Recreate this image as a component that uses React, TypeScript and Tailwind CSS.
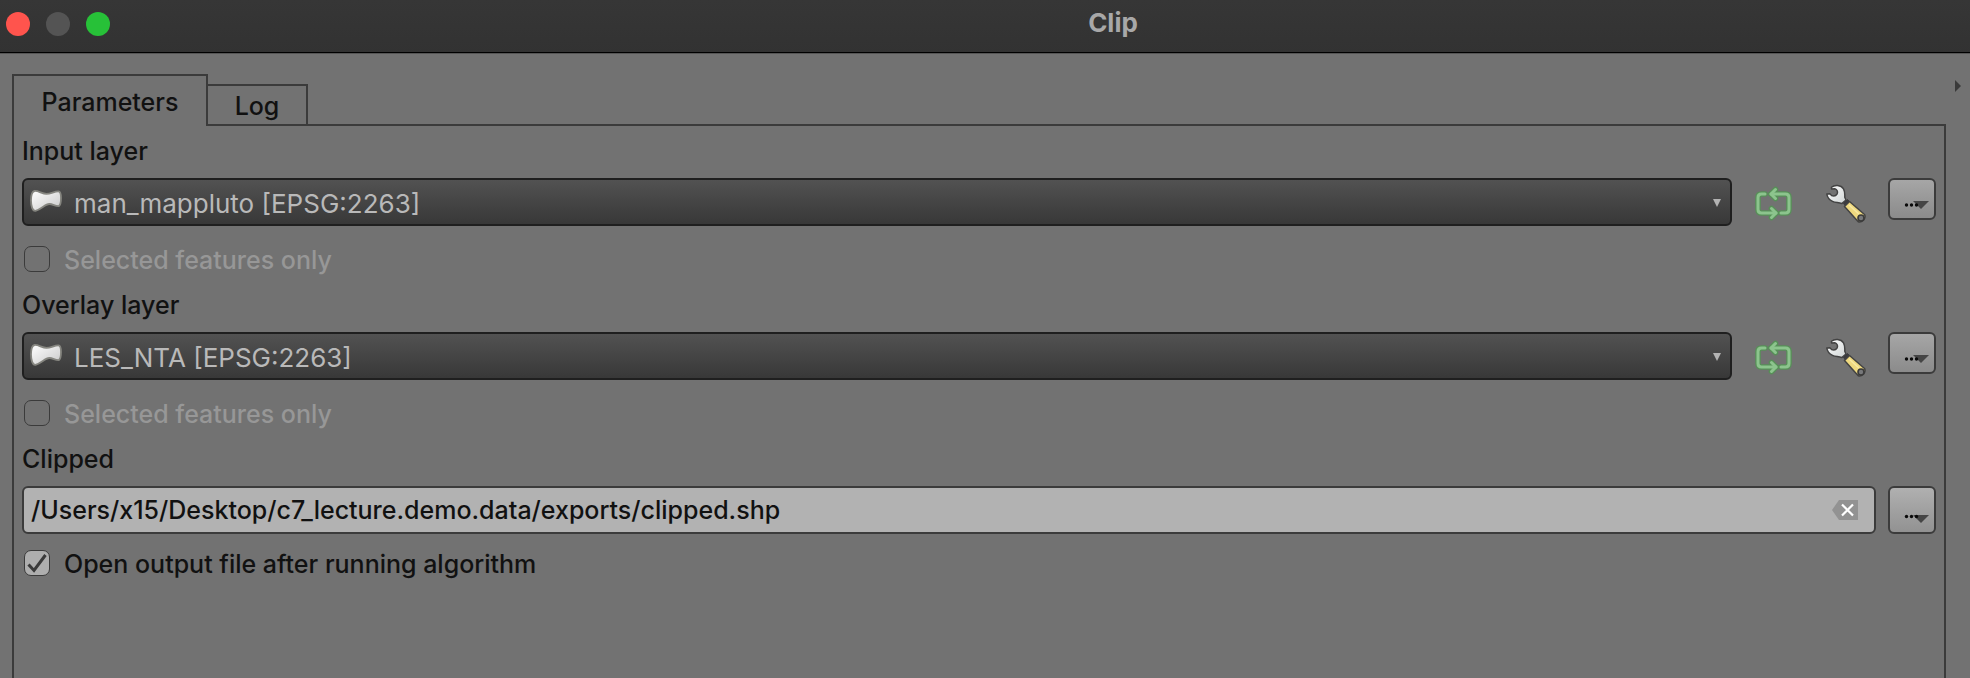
import { useState } from "react";

function PolygonIcon() {
  return (
    <svg className="pointer-events-none absolute left-2 top-[11px] h-6 w-8" viewBox="0 0 32 24" aria-hidden="true">
      <defs>
        <linearGradient id="poly" x1="0" y1="0" x2="1" y2="1">
          <stop offset="0" stopColor="#ffffff" />
          <stop offset="1" stopColor="#c8c8c8" />
        </linearGradient>
      </defs>
      <path
        d="M4.500 2C8.500 1.600 12 4.800 16.500 4.800C21 4.800 24.500 2.200 28.500 2.400C30.500 2.600 31 5.500 31 9C31 12.500 30.600 15.800 29 17C26 17.600 23 15.200 19.500 15C15 14.800 11.500 20.500 5.500 21.800C2.500 22.200 1 17 1 11.500C1 6.500 2 2.600 4.500 2Z"
        fill="url(#poly)"
        stroke="#85857f"
        strokeWidth="1.8"
        strokeLinejoin="round"
      />
    </svg>
  );
}

function IteratePaths() {
  return (
    <>
      <path d="M10 7H6.500Q3 7 3 10.500V22.500Q3 26 6.500 26H21" />
      <path d="M16.500 21.500L21 26L16.500 30.500" />
      <path d="M26 26H30.500Q34 26 34 22.500V10.500Q34 7 30.500 7H16" />
      <path d="M20.500 2.500L16 7L20.500 11.500" />
    </>
  );
}

function IterateIcon() {
  return (
    <svg className="h-9 w-10" viewBox="-1 -1 40 36" fill="none" strokeLinecap="round" strokeLinejoin="round" aria-hidden="true">
      <g stroke="#4f9a50" strokeWidth="5.600" opacity="0.75">
        <IteratePaths />
      </g>
      <g stroke="#8cc48d" strokeWidth="3">
        <IteratePaths />
      </g>
    </svg>
  );
}

function WrenchIcon() {
  return (
    <svg className="h-10 w-10" viewBox="0 0 40 40" aria-hidden="true">
      <defs>
        <linearGradient id="steel" x1="0" y1="0" x2="1" y2="1">
          <stop offset="0" stopColor="#ffffff" />
          <stop offset="1" stopColor="#cfd4d4" />
        </linearGradient>
      </defs>
      <path
        d="M5.500 3.200C8.500 0.600 15 0.800 17.500 4.800C19.200 7.800 18.800 10.500 18.800 13.200L20 16L15.800 19.600C12.500 18.200 9.500 19 6.500 17.400C3 15.600 1.200 13 0.800 10L4 9.800C6 12.800 9.500 12.600 11 10.200C12.200 7.800 11 5.400 8.800 4.800L5.500 5Z"
        fill="url(#steel)"
        stroke="#434343"
        strokeWidth="1.500"
        strokeLinejoin="round"
      />
      <path d="M17.500 19.500L21.500 15.500L24 18L19.500 22Z" fill="#3c3c40" stroke="#3c3c40" strokeLinejoin="round" />
      <path
        d="M23.500 17.500L38.500 30.500Q40 33 37.500 36Q34.500 39 32 37.500L18.500 22.500Z"
        fill="#efd97f"
        stroke="#434343"
        strokeWidth="1.500"
        strokeLinejoin="round"
      />
      <path d="M23 21L33 30" stroke="#f8e9a4" strokeWidth="1.500" />
      <circle cx="35" cy="34" r="3" fill="#77787a" stroke="#3a3a3a" strokeWidth="1.600" />
    </svg>
  );
}

function MoreButton({ label, tall }: { label: string; tall?: boolean }) {
  const dotY = tall ? 3.5 : 6;
  return (
    <button
      type="button"
      aria-label={label}
      className={
        "flex w-12 shrink-0 items-end justify-end rounded-md border-2 border-[#3b3b3b] bg-linear-to-b pb-[7px] " +
        (tall ? "h-12 from-[#b0b0b0] to-[#929292]" : "h-[42px] from-[#a6a6a6] to-[#8b8b8b]")
      }
    >
      <svg className="mr-[5px] h-3 w-7" viewBox="0 0 28 12" aria-hidden="true">
        <path d="M12 2H28L20 10Z" fill="#454545" />
        <g fill="#0a0a0a">
          <circle cx="5.500" cy={dotY} r="1.700" />
          <circle cx="10.500" cy={dotY} r="1.700" />
          <circle cx="15.500" cy={dotY} r="1.700" />
        </g>
      </svg>
    </button>
  );
}

function LayerSection({ id, title, layer }: { id: string; title: string; layer: string }) {
  return (
    <section>
      <label htmlFor={id} className="block h-[52px] pt-2 leading-[34px]">
        {title}
      </label>
      <div className="flex items-start">
        <div className="relative min-w-0 flex-1">
          <PolygonIcon />
          <select
            id={id}
            className="block h-12 w-full appearance-none rounded-md border-2 border-[#1f1f1f] bg-linear-to-b from-[#525252] to-[#383838] pl-[50px] pr-10 pt-0.5 text-[26px] font-normal text-[#b9b9b9]"
          >
            <option>{layer}</option>
          </select>
          <svg className="pointer-events-none absolute right-2.5 top-5 size-2.5" viewBox="0 0 10 10" aria-hidden="true">
            <path d="M1 1H9L5 9Z" fill="#b3b3b3" />
          </svg>
        </div>
        <button type="button" aria-label="Iterate over this layer" className="ml-[22px] mt-2 flex h-9 w-10 items-center justify-center">
          <IterateIcon />
        </button>
        <button type="button" aria-label="Advanced options" className="ml-8 mr-[22px] mt-1.5 flex size-10 items-center justify-center">
          <WrenchIcon />
        </button>
        <MoreButton label={"Browse " + title} />
      </div>
      <label className="mb-2 mt-5 flex h-[26px] items-center gap-3.5 pl-0.5 text-[#979797]">
        <input type="checkbox" disabled className="size-[26px] appearance-none rounded-[7px] border border-[#3b3b3b]" />
        <span className="pt-1">Selected features only</span>
      </label>
    </section>
  );
}

export default function App() {
  const [path, setPath] = useState("/Users/x15/Desktop/c7_lecture.demo.data/exports/clipped.shp");
  const [open, setOpen] = useState(true);

  return (
    <div className="flex min-h-screen flex-col bg-[#727272] font-['Inter',sans-serif] text-[25px] font-medium text-[#111]">
      <header className="grid h-[54px] grid-cols-[256px_1fr] items-center border-b border-[#565656] bg-linear-to-b from-[#363636] to-[#323232] pb-[5px] shadow-[inset_0_-1px_0_#000]">
        <div className="flex gap-4 pl-1.5">
          <button type="button" aria-label="Close" className="size-6 rounded-full bg-[#ff544d]" />
          <button type="button" aria-label="Minimize" className="size-6 rounded-full bg-[#545454]" />
          <button type="button" aria-label="Zoom" className="size-6 rounded-full bg-[#27c138]" />
        </div>
        <h1 className="pb-0.5 text-center text-[26px] font-bold leading-8 text-[#a8a8a8]">Clip</h1>
      </header>

      <div className="flex flex-1 pl-3 pt-5">
        <main className="flex min-w-0 flex-1 flex-col">
          <div role="tablist" className="flex h-[52px] items-end">
            <button type="button" role="tab" aria-selected="true" className="h-[52px] w-[196px] border-2 border-b-0 border-[#3b3b3b] pt-1">
              Parameters
            </button>
            <button type="button" role="tab" aria-selected="false" className="h-[42px] w-[100px] border-2 border-l-0 border-[#3b3b3b] pt-0.5">
              Log
            </button>
            <div className="h-0.5 flex-1 bg-[#3b3b3b]" />
          </div>

          <div role="tabpanel" className="flex-1 border-x-2 border-[#3b3b3b] px-2">
            <LayerSection id="input-layer" title="Input layer" layer="man_mappluto [EPSG:2263]" />
            <LayerSection id="overlay-layer" title="Overlay layer" layer="LES_NTA [EPSG:2263]" />

            <section>
              <label htmlFor="clipped" className="block h-[52px] pt-2 leading-[34px]">
                Clipped
              </label>
              <div className="flex gap-3">
                <div className="relative min-w-0 flex-1">
                  <input
                    id="clipped"
                    type="text"
                    value={path}
                    onChange={(e) => setPath(e.target.value)}
                    className="block h-12 w-full rounded-md border-2 border-[#3b3b3b] bg-[#b2b2b2] pl-[7px] pr-12 outline-none"
                  />
                  <button type="button" aria-label="Clear" onClick={() => setPath("")} className="absolute right-[18px] top-3.5">
                    <svg className="h-5 w-[26px]" viewBox="0 0 26 20" aria-hidden="true">
                      <path d="M0 10L7 0H26V20H7Z" fill="#929292" />
                      <path d="M10 4.500L21 15.500M21 4.500L10 15.500" stroke="#fff" strokeWidth="2.200" />
                    </svg>
                  </button>
                </div>
                <MoreButton label="Browse output file" tall />
              </div>
              <label className="mt-4 flex h-[26px] items-center gap-3.5 pl-0.5">
                <span className="relative block size-[26px]">
                  <input
                    type="checkbox"
                    checked={open}
                    onChange={(e) => setOpen(e.target.checked)}
                    className="block size-[26px] appearance-none rounded-[7px] border border-[#3b3b3b] bg-[#aeaeae]"
                  />
                  {open && (
                    <svg className="pointer-events-none absolute inset-0 size-[26px]" viewBox="0 0 26 26" aria-hidden="true">
                      <path d="M4.500 14.500L10 20.500L21.500 5" fill="none" stroke="#3a3a3a" strokeWidth="3" />
                    </svg>
                  )}
                </span>
                <span className="pt-1">Open output file after running algorithm</span>
              </label>
            </section>
          </div>
        </main>

        <aside className="w-6 pl-[9px] pt-1.5">
          <button type="button" aria-label="Show help panel" className="block">
            <svg className="h-3 w-1.5" viewBox="0 0 6 12" aria-hidden="true">
              <path d="M0 0L6 6L0 12Z" fill="#3a3a3a" />
            </svg>
          </button>
        </aside>
      </div>
    </div>
  );
}
